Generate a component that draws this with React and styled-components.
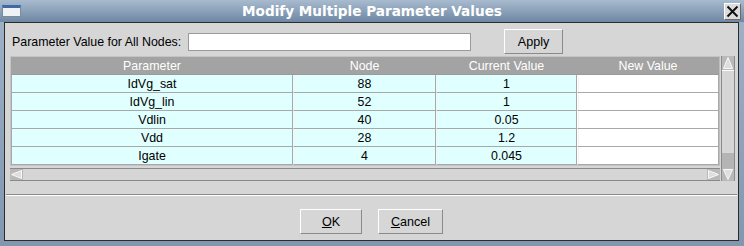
import React from "react";
import styled, { createGlobalStyle } from "styled-components";

const Global = createGlobalStyle`
  html, body { margin: 0; padding: 0; background: #8da3bb; }
  * { box-sizing: border-box; }
`;

const Window = styled.div`
  width: 744px;
  height: 246px;
  display: flex;
  flex-direction: column;
  background: linear-gradient(#9fb3c8, #8197b0);
  padding: 0 5px 5px 4px;
  font-family: "Liberation Sans", Arial, sans-serif;
  font-size: 12.4px;
  color: #000;
`;

const TitleBar = styled.div`
  height: 22px;
  flex: none;
  display: grid;
  grid-template-columns: 24px 1fr 24px;
  align-items: center;
  margin: 0 -5px 0 -4px;
  padding: 0 4px 0 2px;
  background: linear-gradient(#a8bbcf, #6e87a3);
`;

const TitleText = styled.div`
  text-align: center;
  font-family: "DejaVu Sans", sans-serif;
  font-weight: bold;
  font-size: 13.6px;
  color: #fff;
  padding-left: 2px;
`;

const WinIcon = styled.div`
  width: 19px;
  height: 12px;
  border: 1px solid #7d8b99;
  border-top: 3px solid #3f6aa3;
  background: #eef2f4;
`;

const CloseBtn = styled.div`
  width: 17px;
  height: 17px;
  justify-self: end;
  margin-right: -1px;
  background: #dcdcdc;
  border-top: 1px solid #fff;
  border-left: 1px solid #fff;
  border-right: 1px solid #6b6b6b;
  border-bottom: 1px solid #6b6b6b;
  display: flex;
  align-items: center;
  justify-content: center;
`;

const Body = styled.div`
  flex: 1;
  background: #d6d6d6;
  border: 1px solid #2b2b2b;
  display: flex;
  flex-direction: column;
`;

const TopRow = styled.div`
  display: flex;
  align-items: center;
  margin-top: 6px;
  padding-left: 7px;
  height: 25px;
`;

const Label = styled.div`
  width: 176px;
  white-space: nowrap;
`;

const TextInput = styled.div`
  width: 283px;
  height: 18px;
  background: #fff;
  border: 1px solid #9a9a9a;
`;

const Button = styled.div`
  width: ${(p) => p.$w}px;
  height: 25px;
  margin-left: ${(p) => p.$ml || 0}px;
  display: flex;
  align-items: center;
  justify-content: center;
  background: #d6d6d6;
  border-top: 1px solid #fff;
  border-left: 1px solid #fff;
  border-right: 1px solid #8a8a8a;
  border-bottom: 1px solid #8a8a8a;
  font-size: 12.6px;
`;

const U = styled.span`
  text-decoration: underline;
`;

const TableArea = styled.div`
  margin: 2px 0 0 5px;
  display: grid;
  grid-template-columns: 710px 14px;
  grid-template-rows: 110px 2px 13px;
  column-gap: 1px;
`;

const TableBox = styled.div`
  border: 1px solid #c4c4c4;
  border-right-color: #bdbdbd;
  background: #d6d6d6;
  display: flex;
  flex-direction: column;
`;

const Row = styled.div`
  display: grid;
  grid-template-columns: 282px 143px 141px 142px;
  height: 18px;
`;

const HeadCell = styled.div`
  background: #a3a3a3;
  color: #fff;
  display: flex;
  align-items: center;
  justify-content: center;
  border-bottom: 1px solid #9a9a9a;
`;

const Cell = styled.div`
  background: ${(p) => (p.$edit ? "#ffffff" : "#e0ffff")};
  display: flex;
  align-items: center;
  justify-content: center;
  border-left: 1px solid ${(p) => (p.$first ? "#a8a8a8" : "transparent")};
  border-right: 1px solid #a8a8a8;
  border-bottom: 1px solid #a8a8a8;
  box-shadow: inset 1px 0 0 ${(p) => (p.$first ? "transparent" : "#f4f4f4")};
`;

const HScroll = styled.div`
  grid-column: 1;
  grid-row: 3;
  display: flex;
  border-top: 1px solid #8a8a8a;
  border-bottom: 1px solid #8a8a8a;
  background: #d6d6d6;
`;

const VScroll = styled.div`
  grid-column: 2;
  grid-row: 1 / 4;
  display: flex;
  flex-direction: column;
  border-left: 1px solid #8a8a8a;
  border-right: 1px solid #8a8a8a;
  background: #d6d6d6;
`;

const Track = styled.div`
  flex: 1;
  background: #d6d6d6;
  border-top: ${(p) => (p.$bt ? "1px solid #fff" : "none")};
`;

const Trough = styled.div`
  flex: none;
  height: 15px;
  background: #b4b4b4;
`;

const ArrowBox = styled.div`
  flex: none;
  width: ${(p) => p.$w}px;
  height: ${(p) => p.$h}px;
  display: flex;
  svg { display: block; }
`;

const Separator = styled.div`
  margin: 13px 1px 0 1px;
  height: 2px;
  border-top: 1px solid #8a8a8a;
  border-bottom: 1px solid #fff;
`;

const ButtonRow = styled.div`
  display: flex;
  justify-content: center;
  gap: 16px;
  margin-top: 13px;
`;

const Arrow = ({ dir, w, h }) => {
  let pts;
  if (dir === "up") pts = `${w / 2},1.5 1.5,${h - 1.5} ${w - 1.5},${h - 1.5}`;
  else if (dir === "down") pts = `1.5,1.5 ${w - 1.5},1.5 ${w / 2},${h - 1.5}`;
  else if (dir === "left") pts = `1.5,${h / 2} ${w - 1.5},1.5 ${w - 1.5},${h - 1.5}`;
  else pts = `1.5,1.5 ${w - 1.5},${h / 2} 1.5,${h - 1.5}`;
  return (
    <ArrowBox $w={w} $h={h}>
      <svg width={w} height={h} viewBox={`0 0 ${w} ${h}`}>
        <rect x="0" y="0" width={w} height={h} fill="#b9b9b9" />
        <polygon points={pts} fill="#dedede" stroke="#f8f8f8" strokeWidth="1" />
      </svg>
    </ArrowBox>
  );
};

const rows = [
  ["IdVg_sat", "88", "1"],
  ["IdVg_lin", "52", "1"],
  ["Vdlin", "40", "0.05"],
  ["Vdd", "28", "1.2"],
  ["Igate", "4", "0.045"],
];

export default function App() {
  return (
    <>
      <Global />
      <Window>
        <TitleBar>
          <WinIcon />
          <TitleText>Modify Multiple Parameter Values</TitleText>
          <CloseBtn>
            <svg width="13" height="13" viewBox="0 0 13 13">
              <path d="M1.5 1.5 L11.5 11.5 M11.5 1.5 L1.5 11.5" stroke="#111" strokeWidth="2" />
            </svg>
          </CloseBtn>
        </TitleBar>
        <Body>
          <TopRow>
            <Label>Parameter Value for All Nodes:</Label>
            <TextInput />
            <Button $w={59} $ml={33}>Apply</Button>
          </TopRow>
          <TableArea>
            <TableBox>
              <Row>
                <HeadCell>Parameter</HeadCell>
                <HeadCell>Node</HeadCell>
                <HeadCell>Current Value</HeadCell>
                <HeadCell>New Value</HeadCell>
              </Row>
              {rows.map((r) => (
                <Row key={r[0]}>
                  <Cell $first>{r[0]}</Cell>
                  <Cell>{r[1]}</Cell>
                  <Cell>{r[2]}</Cell>
                  <Cell $edit />
                </Row>
              ))}
            </TableBox>
            <VScroll>
              <Arrow dir="up" w={12} h={14} />
              <Track $bt />
              <Trough />
              <Arrow dir="down" w={12} h={13} />
            </VScroll>
            <HScroll>
              <Arrow dir="left" w={13} h={11} />
              <Track />
              <Arrow dir="right" w={13} h={11} />
            </HScroll>
          </TableArea>
          <Separator />
          <ButtonRow>
            <Button $w={62}>
              <span><U>O</U>K</span>
            </Button>
            <Button $w={65}>
              <span><U>C</U>ancel</span>
            </Button>
          </ButtonRow>
        </Body>
      </Window>
    </>
  );
}
